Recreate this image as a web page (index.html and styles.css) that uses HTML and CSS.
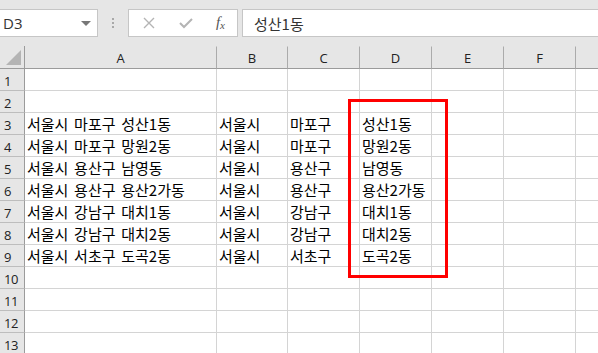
FILE: index.html
```html
<!DOCTYPE html>
<html lang="ko">
<head>
<meta charset="utf-8">
<link rel="stylesheet" href="styles.css">
</head>
<body>
<div class="app">
  <div class="toolbar">
    <div class="namebox"><span>D3</span><span class="caret"></span></div>
    <div class="grip"><i></i><i></i><i></i></div>
    <div class="fbtns">
      <svg class="ic" width="14" height="14" viewBox="0 0 14 14"><path d="M2 2L12 12M12 2L2 12" stroke="#b4b4b4" stroke-width="1.4" fill="none"/></svg>
      <svg class="ic" width="16" height="14" viewBox="0 0 16 14"><path d="M2 7L6 11L14 3" stroke="#b4b4b4" stroke-width="2" fill="none"/></svg>
      <span class="fx">f<sub>x</sub></span>
    </div>
    <div class="finput">성산1동</div>
  </div>
  <div class="sheet">
    <div class="grid">
      <div class="corner"><span class="tri"></span></div>
      <div class="ch">A</div><div class="ch">B</div><div class="ch">C</div><div class="ch">D</div><div class="ch">E</div><div class="ch">F</div><div class="ch"></div>

      <div class="rh">1</div><div class="c"></div><div class="c"></div><div class="c"></div><div class="c"></div><div class="c"></div><div class="c"></div><div class="c"></div>
      <div class="rh">2</div><div class="c"></div><div class="c"></div><div class="c"></div><div class="c"></div><div class="c"></div><div class="c"></div><div class="c"></div>
      <div class="rh">3</div><div class="c">서울시 마포구 성산1동</div><div class="c">서울시</div><div class="c">마포구</div><div class="c">성산1동</div><div class="c"></div><div class="c"></div><div class="c"></div>
      <div class="rh">4</div><div class="c">서울시 마포구 망원2동</div><div class="c">서울시</div><div class="c">마포구</div><div class="c">망원2동</div><div class="c"></div><div class="c"></div><div class="c"></div>
      <div class="rh">5</div><div class="c">서울시 용산구 남영동</div><div class="c">서울시</div><div class="c">용산구</div><div class="c">남영동</div><div class="c"></div><div class="c"></div><div class="c"></div>
      <div class="rh">6</div><div class="c">서울시 용산구 용산2가동</div><div class="c">서울시</div><div class="c">용산구</div><div class="c">용산2가동</div><div class="c"></div><div class="c"></div><div class="c"></div>
      <div class="rh">7</div><div class="c">서울시 강남구 대치1동</div><div class="c">서울시</div><div class="c">강남구</div><div class="c">대치1동</div><div class="c"></div><div class="c"></div><div class="c"></div>
      <div class="rh">8</div><div class="c">서울시 강남구 대치2동</div><div class="c">서울시</div><div class="c">강남구</div><div class="c">대치2동</div><div class="c"></div><div class="c"></div><div class="c"></div>
      <div class="rh">9</div><div class="c">서울시 서초구 도곡2동</div><div class="c">서울시</div><div class="c">서초구</div><div class="c">도곡2동</div><div class="c"></div><div class="c"></div><div class="c"></div>
      <div class="rh">10</div><div class="c"></div><div class="c"></div><div class="c"></div><div class="c"></div><div class="c"></div><div class="c"></div><div class="c"></div>
      <div class="rh">11</div><div class="c"></div><div class="c"></div><div class="c"></div><div class="c"></div><div class="c"></div><div class="c"></div><div class="c"></div>
      <div class="rh">12</div><div class="c"></div><div class="c"></div><div class="c"></div><div class="c"></div><div class="c"></div><div class="c"></div><div class="c"></div>
      <div class="rh">13</div><div class="c"></div><div class="c"></div><div class="c"></div><div class="c"></div><div class="c"></div><div class="c"></div><div class="c"></div>
    </div>
    <div class="highlight"></div>
  </div>
</div>
</body>
</html>
```

FILE: styles.css
```css
* { box-sizing: border-box; }
html, body { margin: 0; padding: 0; }
body {
  width: 598px;
  height: 353px;
  overflow: hidden;
  background: #e6e6e6;
  font-family: "Noto Sans", "Noto Sans CJK KR", sans-serif;
}
.app { width: 598px; height: 353px; overflow: hidden; }

.toolbar {
  height: 46px;
  padding-top: 9px;
  display: flex;
  align-items: flex-start;
  background: #e6e6e6;
}
.namebox {
  width: 98px;
  height: 28px;
  background: #fff;
  border: 1px solid #c6c6c6;
  border-left: none;
  display: flex;
  align-items: center;
  justify-content: space-between;
  padding: 0 6px 0 3px;
  font-family: "Open Sans", sans-serif;
  font-size: 15px;
  color: #333;
}
.caret {
  width: 0; height: 0;
  border-left: 5px solid transparent;
  border-right: 5px solid transparent;
  border-top: 5px solid #777;
}
.grip {
  width: 30px;
  height: 28px;
  display: flex;
  flex-direction: column;
  align-items: center;
  justify-content: center;
  gap: 2px;
}
.grip i { display: block; width: 2px; height: 2px; background: #a8a8a8; }
.fbtns {
  width: 110px;
  height: 28px;
  background: #fff;
  border: 1px solid #c6c6c6;
  display: flex;
  align-items: center;
  justify-content: space-between;
  padding: 0 12px 0 13px;
}
.fx {
  font-family: "Liberation Serif", serif;
  font-style: italic;
  font-size: 15px;
  color: #555;
  line-height: 1;
}
.fx sub { font-size: 11px; vertical-align: -2px; }
.finput {
  flex: 1;
  margin-left: 4px;
  height: 28px;
  background: #fff;
  border: 1px solid #c6c6c6;
  border-right: none;
  padding-left: 11px;
  display: flex;
  align-items: center;
  font-family: "Noto Sans CJK KR", sans-serif;
  font-size: 15px;
  color: #333;
}

.sheet { position: relative; background: #fff; }
.grid {
  display: grid;
  grid-template-columns: 25px 192px 71px 72px 72px 72px 72px 23px;
  grid-template-rows: 23px repeat(13, 22px);
}
.corner {
  background: #e6e6e6;
  border-right: 1px solid #9b9b9b;
  border-bottom: 1px solid #9b9b9b;
  position: relative;
}
.tri {
  position: absolute;
  right: 3px;
  bottom: 3px;
  width: 0; height: 0;
  border-left: 15px solid transparent;
  border-bottom: 15px solid #b4b4b4;
}
.ch {
  background: #e6e6e6;
  border-bottom: 1px solid #9b9b9b;
  border-right: 1px solid #ababab;
  border-top: 1px solid #e6e6e6;
  display: flex;
  align-items: center;
  justify-content: center;
  font-family: "Open Sans", sans-serif;
  font-size: 13px;
  color: #222;
  padding-top: 1px;
}
.ch:nth-child(8) { border-right: none; }
.rh {
  background: #e6e6e6;
  border-right: 1px solid #9b9b9b;
  border-bottom: 1px solid #bdbdbd;
  font-family: "Open Sans", sans-serif;
  font-size: 13px;
  color: #222;
  padding-left: 4px;
  display: flex;
  align-items: center;
  padding-top: 2px;
  letter-spacing: -0.5px;
}
.c {
  border-right: 1px solid #d4d4d4;
  border-bottom: 1px solid #d4d4d4;
  font-family: "Noto Sans CJK KR", sans-serif;
  font-size: 15px;
  color: #000;
  padding-left: 2px;
  line-height: 20px;
  padding-top: 1px;
  white-space: nowrap;
  overflow: visible;
  word-spacing: 1.5px;
}
.highlight {
  position: absolute;
  left: 348px;
  top: 53px;
  width: 100px;
  height: 179px;
  border: 3px solid #ff0000;
  pointer-events: none;
}
```
